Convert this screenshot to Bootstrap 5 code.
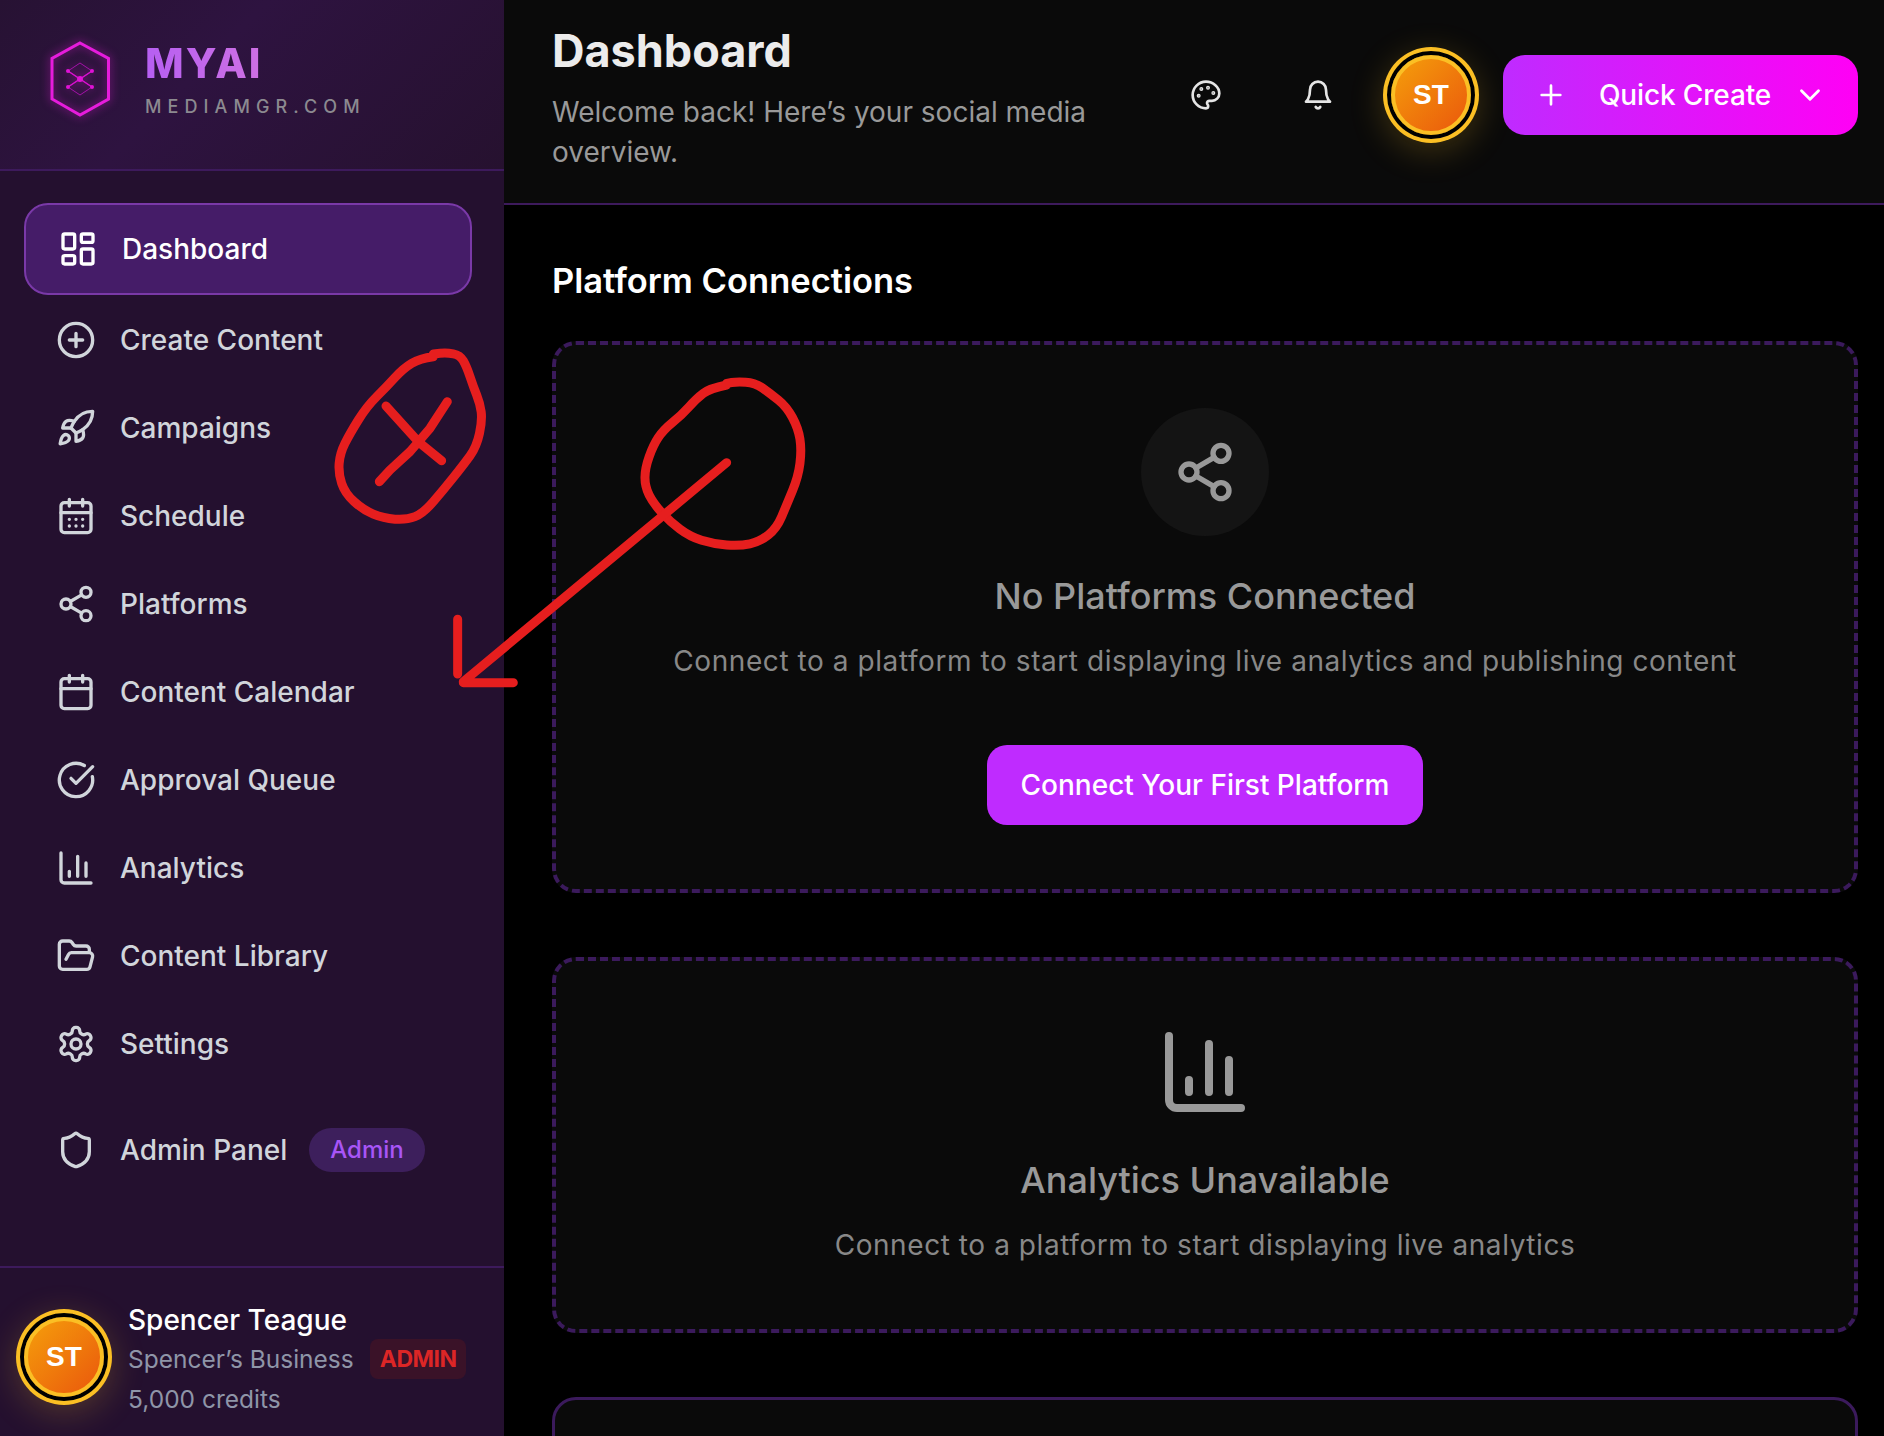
<!DOCTYPE html>
<html lang="en">
<head>
  <meta charset="UTF-8" />
  <meta name="viewport" content="width=device-width, initial-scale=1" />
  <title>MYAI Dashboard</title>
  <link href="https://cdn.jsdelivr.net/npm/bootstrap@5.3.0/dist/css/bootstrap.min.css" rel="stylesheet" />
  <style>
    html, body { height: 100%; }
    body { background: #000; font-family: Inter, "Liberation Sans", sans-serif; color: #fff; overflow: hidden; }
    .ico { fill: none; stroke: currentColor; stroke-width: 2; stroke-linecap: round; stroke-linejoin: round; flex-shrink: 0; }
    .shell { height: 1436px; }

    .side { width: 504px; flex-shrink: 0; background: #24102f; }
    .side-top { height: 171px; padding: 41px 0 0 50px; gap: 35px; background: linear-gradient(135deg, #271233, #2e1340 40%, #26112f); border-bottom: 2px solid #3d1a5c; }
    .logo-hex { filter: drop-shadow(0 0 5px #e619d8aa); }
    .brand-name { font-size: 41px; line-height: 46px; font-weight: 800; letter-spacing: 2px; margin-top: -1px;
      background: linear-gradient(90deg, #b65ff2, #e37fd6); -webkit-background-clip: text; background-clip: text; color: transparent; }
    .brand-sub { font-size: 18px; line-height: 22px; color: #8c8a90; letter-spacing: 6.1px; margin-top: 10px; font-weight: 500; }
    .side-nav { padding: 32px 32px 0 24px; gap: 4px; }
    .side-item { height: 84px; padding: 0 0 0 32px; gap: 24px; font-size: 28px; font-weight: 500; color: #d1d5db; text-decoration: none; }
    .side-item.is-active { height: 92px; border: 2px solid #7a39a8; border-radius: 24px; background: #451c68; color: #fff; margin-bottom: -1px; }
    .side-item.is-admin { margin-top: 18px; }
    .side-item.is-admin .tag-admin { margin-left: -2px; }
    .tag-admin { background: #3d1f5c; color: #a855f7; font-size: 24px; line-height: 44px; padding: 0 21px; border-radius: 22px; }
    .side-foot { height: 170px; border-top: 2px solid #3d1a5c; padding: 49px 0 0 24px; gap: 24px; margin-top: auto; }
    .avatar-ring { width: 80px; height: 80px; border-radius: 50%; border: 4px solid #fbbf24; flex-shrink: 0;
      background: linear-gradient(135deg, #f59e0b, #ea580c); font: 700 28px/1 "Liberation Sans", sans-serif; color: #fff;
      box-shadow: 0 0 0 4px #000, 0 0 0 8px #fbbf24, 0 8px 34px 8px rgba(251, 191, 36, .22); }
    .foot-name { font-size: 28px; line-height: 38px; font-weight: 500; margin-top: -16px; }
    .foot-sub { font-size: 24.500px; line-height: 40px; color: #8f95a8; }
    .tag-role { background: #3a1228; color: #dc2626; font-size: 23px; line-height: 40px; font-weight: 700; letter-spacing: -.5px; padding: 0 10px; border-radius: 8px; }

    .page-head { height: 205px; background: #0a0a0a; border-bottom: 2px solid #3d1a5c; padding: 24px 26px 0 48px; }
    .page-title { font-size: 45px; line-height: 54px; font-weight: 700; color: #ececec; margin: 0 0 14px; }
    .page-sub { font-size: 28px; line-height: 40px; color: #999; width: 560px; margin: 0; }
    .head-btn { color: #e5e5e5; margin-top: 55px; }
    .head-palette { margin-right: 80px; }
    .head-avatar { margin: 31px 32px 0 57px; }
    .quick-btn { width: 355px; height: 80px; margin-top: 31px; border: 0; border-radius: 22px; background: linear-gradient(90deg, #bf2bff, #ff00f5); color: #fff; font-size: 28px; font-weight: 500; letter-spacing: -.15px; padding: 0 31px 0 32px; }
    .quick-btn span { margin-left: 32px; }
    .page-body { padding: 56px 26px 0 48px; }
    .section-title { font-size: 34.500px; line-height: 40px; font-weight: 600; margin: 0 0 40px; }
    .empty-box { background: #0a0a0a; border: 4px dashed #3b1a5c; border-radius: 24px; padding: 63px 20px 0; text-align: center; }
    .box-a { height: 552px; margin-bottom: 64px; }
    .box-b { height: 376px; margin-bottom: 64px; }
    .box-c { height: 80px; border-style: solid; border-width: 3px; }
    .round-icon { width: 128px; height: 128px; border-radius: 50%; background: #141414; color: #999; margin: 0 auto; }
    .chart-icon { color: #999; }
    .empty-title { font-size: 36px; line-height: 44px; font-weight: 500; color: #999; margin: 38px 0 0; }
    .empty-text { font-size: 28px; line-height: 40px; color: #888; letter-spacing: .57px; margin: 23px 0 0; }
    .connect-btn { width: 436px; height: 80px; margin-top: 64px; border: 0; border-radius: 20px; background: #bf2bff; color: #fff; font-size: 28px; font-weight: 500; }
    .marks { position: absolute; top: 0; left: 0; pointer-events: none; }
    .marks path { fill: none; stroke: #e61e1e; stroke-width: 27; stroke-linecap: round; stroke-linejoin: round; }
  </style>
</head>
<body>
  <div class="shell d-flex position-relative">
    <aside class="side d-flex flex-column">
      <div class="side-top d-flex">
        <svg class="logo-hex" width="60" height="76" viewBox="50 40 60 76">
          <path d="M80 42 108.500 57.500V98L80 114 52 98V57.500Z" fill="none" stroke="#e61cdc" stroke-width="3"/>
          <path d="M80 62 92 70 80 78 68 70ZM80 78 92 86 80 94 68 86Z" fill="none" stroke="#a313a8" stroke-width="1"/>
          <path d="M68 70 92 86M92 70 68 86" stroke="#d911cf" stroke-width="1.500"/>
          <g fill="#e012d6"><circle cx="68" cy="70" r="2"/><circle cx="92" cy="70" r="2"/><circle cx="68" cy="86" r="2"/><circle cx="92" cy="86" r="2"/><circle cx="80" cy="78" r="3"/></g>
        </svg>
        <div>
          <div class="brand-name">MYAI</div>
          <div class="brand-sub">MEDIAMGR.COM</div>
        </div>
      </div>

      <nav class="side-nav nav flex-column flex-nowrap">
        <a href="#" class="side-item is-active d-flex align-items-center">
          <svg class="ico" width="40" height="40" viewBox="0 0 24 24"><rect x="3" y="3" width="7" height="9" rx="1"/><rect x="14" y="3" width="7" height="5" rx="1"/><rect x="14" y="12" width="7" height="9" rx="1"/><rect x="3" y="16" width="7" height="5" rx="1"/></svg>
          Dashboard
        </a>
        <a href="#" class="side-item d-flex align-items-center">
          <svg class="ico" width="40" height="40" viewBox="0 0 24 24"><circle cx="12" cy="12" r="10"/><path d="M8 12h8M12 8v8"/></svg>
          Create Content
        </a>
        <a href="#" class="side-item d-flex align-items-center">
          <svg class="ico" width="40" height="40" viewBox="0 0 24 24"><path d="M4.500 16.500c-1.500 1.260-2 5-2 5s3.740-.5 5-2c.71-.84.7-2.130-.09-2.910a2.180 2.180 0 0 0-2.910-.09z"/><path d="m12 15-3-3a22 22 0 0 1 2-3.950A12.880 12.880 0 0 1 22 2c0 2.720-.78 7.500-6 11a22.350 22.350 0 0 1-4 2z"/><path d="M9 12H4s.55-3.030 2-4c1.620-1.080 5 0 5 0"/><path d="M12 15v5s3.030-.55 4-2c1.080-1.620 0-5 0-5"/></svg>
          Campaigns
        </a>
        <a href="#" class="side-item d-flex align-items-center">
          <svg class="ico" width="40" height="40" viewBox="0 0 24 24"><rect x="3" y="4" width="18" height="18" rx="2"/><path d="M16 2v4M8 2v4M3 10h18M8 14h.01M12 14h.01M16 14h.01M8 18h.01M12 18h.01M16 18h.01"/></svg>
          Schedule
        </a>
        <a href="#" class="side-item d-flex align-items-center">
          <svg class="ico" width="40" height="40" viewBox="0 0 24 24"><circle cx="18" cy="5" r="3"/><circle cx="6" cy="12" r="3"/><circle cx="18" cy="19" r="3"/><path d="m8.590 13.510 6.830 3.980M15.410 6.510l-6.820 3.980"/></svg>
          Platforms
        </a>
        <a href="#" class="side-item d-flex align-items-center">
          <svg class="ico" width="40" height="40" viewBox="0 0 24 24"><rect x="3" y="4" width="18" height="18" rx="2"/><path d="M16 2v4M8 2v4M3 10h18"/></svg>
          Content Calendar
        </a>
        <a href="#" class="side-item d-flex align-items-center">
          <svg class="ico" width="40" height="40" viewBox="0 0 24 24"><path d="M21.801 10A10 10 0 1 1 17 3.335"/><path d="m9 11 3 3L22 4"/></svg>
          Approval Queue
        </a>
        <a href="#" class="side-item d-flex align-items-center">
          <svg class="ico" width="40" height="40" viewBox="0 0 24 24"><path d="M3 3v16a2 2 0 0 0 2 2h16M18 17V9M13 17V5M8 17v-3"/></svg>
          Analytics
        </a>
        <a href="#" class="side-item d-flex align-items-center">
          <svg class="ico" width="40" height="40" viewBox="0 0 24 24"><path d="m6 14 1.500-2.900A2 2 0 0 1 9.240 10H20a2 2 0 0 1 1.940 2.500l-1.540 6a2 2 0 0 1-1.950 1.500H4a2 2 0 0 1-2-2V5a2 2 0 0 1 2-2h3.900a2 2 0 0 1 1.690.9l.81 1.200a2 2 0 0 0 1.670.9H18a2 2 0 0 1 2 2v2"/></svg>
          Content Library
        </a>
        <a href="#" class="side-item d-flex align-items-center">
          <svg class="ico" width="40" height="40" viewBox="0 0 24 24"><path d="M12.220 2h-.44a2 2 0 0 0-2 2v.18a2 2 0 0 1-1 1.730l-.43.25a2 2 0 0 1-2 0l-.15-.08a2 2 0 0 0-2.730.73l-.22.38a2 2 0 0 0 .73 2.730l.15.1a2 2 0 0 1 1 1.720v.51a2 2 0 0 1-1 1.740l-.15.09a2 2 0 0 0-.73 2.730l.22.38a2 2 0 0 0 2.730.73l.15-.08a2 2 0 0 1 2 0l.43.25a2 2 0 0 1 1 1.730V20a2 2 0 0 0 2 2h.44a2 2 0 0 0 2-2v-.18a2 2 0 0 1 1-1.730l.43-.25a2 2 0 0 1 2 0l.15.08a2 2 0 0 0 2.730-.73l.22-.39a2 2 0 0 0-.73-2.730l-.15-.08a2 2 0 0 1-1-1.740v-.5a2 2 0 0 1 1-1.740l.15-.09a2 2 0 0 0 .73-2.730l-.22-.38a2 2 0 0 0-2.730-.73l-.15.08a2 2 0 0 1-2 0l-.43-.25a2 2 0 0 1-1-1.730V4a2 2 0 0 0-2-2z"/><circle cx="12" cy="12" r="3"/></svg>
          Settings
        </a>
        <a href="#" class="side-item is-admin d-flex align-items-center">
          <svg class="ico" width="40" height="40" viewBox="0 0 24 24"><path d="M20 13c0 5-3.500 7.500-7.660 8.950a1 1 0 0 1-.67-.01C7.500 20.500 4 18 4 13V6a1 1 0 0 1 1-1c2 0 4.500-1.200 6.240-2.720a1.170 1.170 0 0 1 1.520 0C14.510 3.810 17 5 19 5a1 1 0 0 1 1 1z"/></svg>
          <span>Admin Panel</span>
          <span class="tag-admin">Admin</span>
        </a>
      </nav>

      <div class="side-foot d-flex">
        <div class="avatar-ring d-flex align-items-center justify-content-center">ST</div>
        <div>
          <div class="foot-name">Spencer Teague</div>
          <div class="d-flex align-items-center gap-3">
            <span class="foot-sub">Spencer’s Business</span>
            <span class="tag-role">ADMIN</span>
          </div>
          <div class="foot-sub">5,000 credits</div>
        </div>
      </div>
    </aside>

    <main class="flex-grow-1">
      <header class="page-head d-flex justify-content-between">
        <div>
          <h1 class="page-title">Dashboard</h1>
          <p class="page-sub">Welcome back! Here’s your social media overview.</p>
        </div>
        <div class="d-flex align-items-start">
          <svg class="ico head-btn head-palette" width="32" height="32" viewBox="0 0 24 24"><circle cx="13.500" cy="6.500" r=".5" fill="currentColor"/><circle cx="17.500" cy="10.500" r=".5" fill="currentColor"/><circle cx="8.500" cy="7.500" r=".5" fill="currentColor"/><circle cx="6.500" cy="12.500" r=".5" fill="currentColor"/><path d="M12 2C6.500 2 2 6.500 2 12s4.500 10 10 10c.926 0 1.648-.746 1.648-1.688 0-.437-.18-.835-.437-1.125-.29-.289-.438-.652-.438-1.125a1.640 1.640 0 0 1 1.668-1.668h1.996c3.051 0 5.555-2.503 5.555-5.554C21.965 6.012 17.461 2 12 2z"/></svg>
          <svg class="ico head-btn" width="32" height="32" viewBox="0 0 24 24"><path d="M6 8a6 6 0 0 1 12 0c0 7 3 9 3 9H3s3-2 3-9"/><path d="M10.300 21a1.940 1.940 0 0 0 3.400 0"/></svg>
          <div class="avatar-ring head-avatar d-flex align-items-center justify-content-center">ST</div>
          <button class="quick-btn d-flex align-items-center">
            <svg class="ico" width="32" height="32" viewBox="0 0 24 24"><path d="M5 12h14M12 5v14"/></svg>
            <span>Quick Create</span>
            <svg class="ico ms-auto" width="34" height="34" viewBox="0 0 24 24"><path d="m6 9 6 6 6-6"/></svg>
          </button>
        </div>
      </header>

      <div class="page-body">
        <h2 class="section-title">Platform Connections</h2>

        <section class="empty-box box-a">
          <div class="round-icon d-flex align-items-center justify-content-center">
            <svg class="ico" width="64" height="64" viewBox="0 0 24 24"><circle cx="18" cy="5" r="3"/><circle cx="6" cy="12" r="3"/><circle cx="18" cy="19" r="3"/><path d="m8.590 13.510 6.830 3.980M15.410 6.510l-6.820 3.980"/></svg>
          </div>
          <h3 class="empty-title">No Platforms Connected</h3>
          <p class="empty-text">Connect to a platform to start displaying live analytics and publishing content</p>
          <button class="connect-btn">Connect Your First Platform</button>
        </section>

        <section class="empty-box box-b">
          <svg class="ico chart-icon d-block mx-auto" width="96" height="96" viewBox="0 0 24 24"><path d="M3 3v16a2 2 0 0 0 2 2h16M18 17V9M13 17V5M8 17v-3"/></svg>
          <h3 class="empty-title">Analytics Unavailable</h3>
          <p class="empty-text">Connect to a platform to start displaying live analytics</p>
        </section>

        <section class="empty-box box-c"></section>
      </div>
    </main>

    <svg class="marks" width="1884" height="1436" viewBox="0 0 1884 1436">
      <g transform="translate(320 340) scale(.3333)">
        <path id="ringLeft"/>
        <path d="M198 198 295 305 365 362M382 185 330 265 270 335 210 390 178 425"/>
        <path id="ringRight"/>
        <path d="M1220 368 430 1025M413 838V1002M430 1028H580"/>
      </g>
    </svg>
  </div>

  <script>
    // the red marker strokes, smoothed through their sampled points
    function smooth(pts) {
      let d = `M${pts[0]} ${pts[1]}`;
      for (let i = 2; i < pts.length - 2; i += 2) {
        d += ` Q${pts[i]} ${pts[i + 1]} ${(pts[i] + pts[i + 2]) / 2} ${(pts[i + 1] + pts[i + 3]) / 2}`;
      }
      return d + ` L${pts[pts.length - 2]} ${pts[pts.length - 1]}`;
    }
    document.getElementById('ringLeft').setAttribute('d', smooth([340,50,300,55,250,85,200,140,140,200,90,280,60,340,55,400,75,460,130,510,190,535,260,540,310,520,370,450,430,375,470,320,487,240,480,190,460,140,440,80,420,45,380,38,340,42]));
    document.getElementById('ringRight').setAttribute('d', smooth([1220,135,1170,145,1130,175,1085,225,1030,270,1000,315,975,385,975,440,1000,490,1050,545,1110,590,1180,612,1260,618,1320,605,1370,565,1400,495,1435,410,1445,330,1435,265,1400,200,1350,160,1305,128,1250,125,1220,130]));
  </script>
</body>
</html>
